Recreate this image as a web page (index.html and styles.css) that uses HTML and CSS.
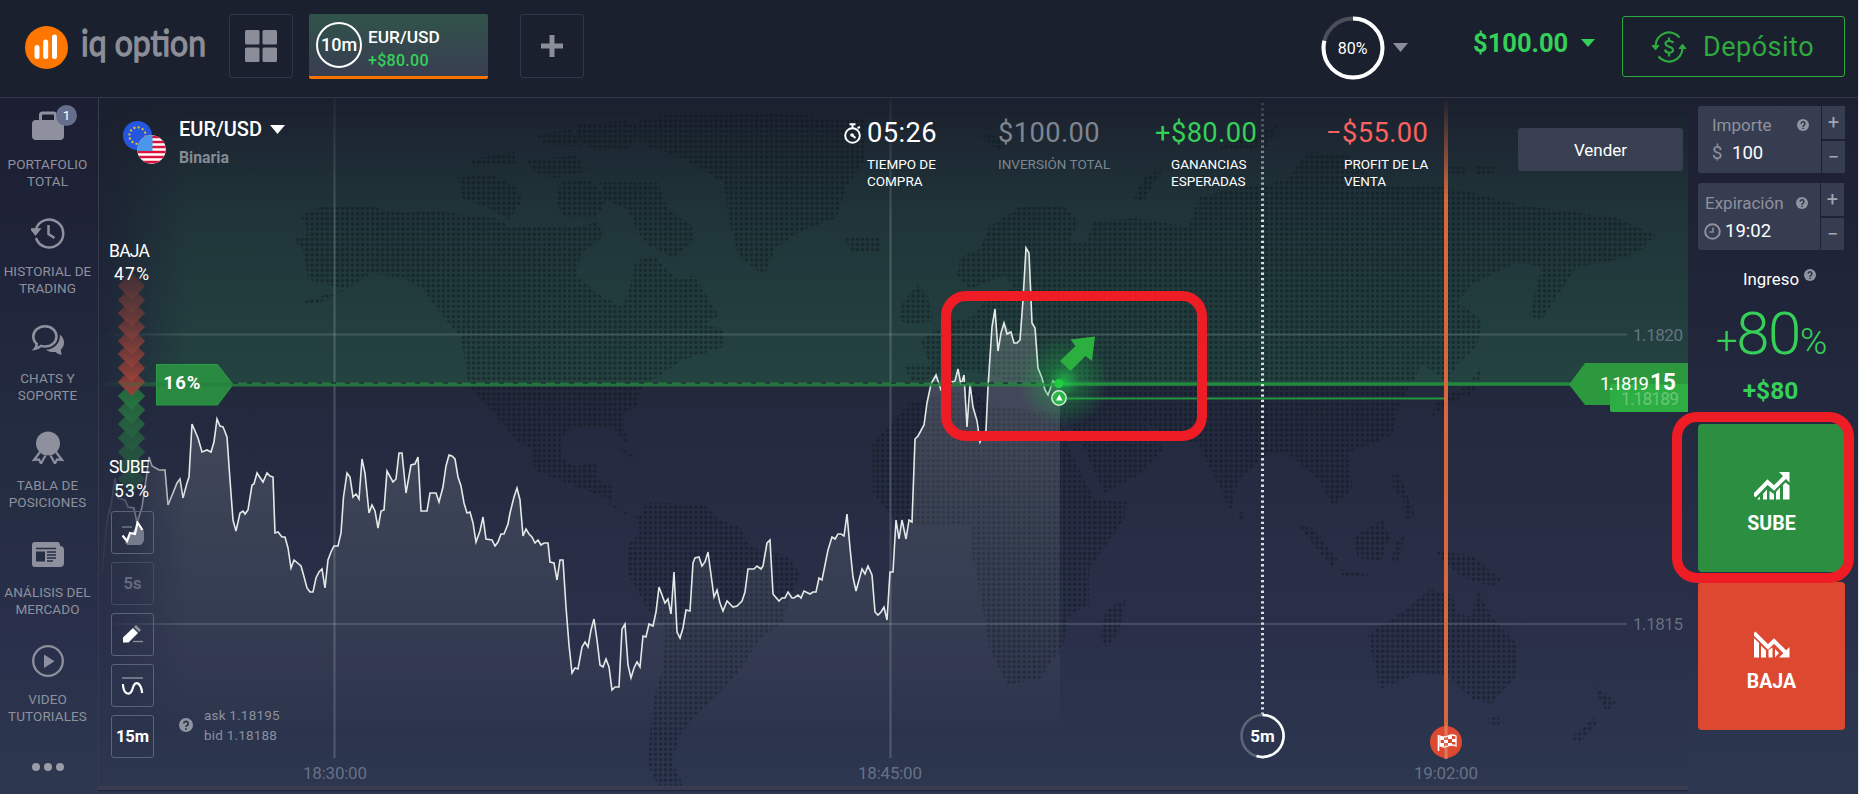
FILE: index.html
```html
<!DOCTYPE html>
<html lang="es">
<head>
  <meta charset="UTF-8" />
  <meta name="viewport" content="width=device-width, initial-scale=1" />
  <title>IQ Option</title>
  <link rel="stylesheet" href="styles.css">
</head>
<body>
  <!-- shared symbols -->
  <svg class="defs" width="0" height="0">
    <symbol id="help" viewBox="0 0 14 14">
      <circle cx="7" cy="7" r="7" fill="#8f94a1"/>
      <path d="M4.8 5.5a2.2 2.2 0 1 1 3.3 1.9q-1.1.6-1.1 1.5M7 10.2v1.5" fill="none" stroke="#2a3045" stroke-width="1.7"/>
    </symbol>
  </svg>

  <header class="main-header">
    <a href="#" class="logo">
      <svg width="43" height="43" viewBox="0 0 43 43">
        <circle cx="21.5" cy="21.5" r="21.5" fill="#ff7700"/>
        <path d="M12 21.5v9M20.7 16v14.5M29.5 11v19.5" stroke="#fff" stroke-width="5" stroke-linecap="round"/>
      </svg>
      <svg class="logo-name" width="140" height="54" viewBox="0 0 140 54">
        <text x="0" y="35" textLength="125" lengthAdjust="spacingAndGlyphs">iq option</text>
      </svg>
    </a>
    <button class="square-btn grid-btn">
      <svg width="32" height="32" viewBox="0 0 32 32" fill="#8b8e98">
        <rect width="14.5" height="14.5" rx="1.5"/><rect x="17.5" width="14.5" height="14.5" rx="1.5"/>
        <rect y="17.5" width="14.5" height="14.5" rx="1.5"/><rect x="17.5" y="17.5" width="14.5" height="14.5" rx="1.5"/>
      </svg>
    </button>
    <div class="tab">
      <span class="tab-time">10m</span>
      <div class="tab-info">
        <span>EUR/USD</span>
        <span class="green">+$80.00</span>
      </div>
    </div>
    <button class="square-btn add-btn">
      <svg width="22" height="22" viewBox="0 0 22 22"><path d="M0 11h22M11 0v22" stroke="#8b8e98" stroke-width="5"/></svg>
    </button>

    <div class="header-right">
      <svg class="progress" width="64" height="64" viewBox="0 0 64 64">
        <circle cx="32" cy="32" r="29.5" fill="none" stroke="#4b4f5a" stroke-width="4"/>
        <circle cx="32" cy="32" r="29.5" fill="none" stroke="#fff" stroke-width="4" pathLength="100" stroke-dasharray="79 100" transform="rotate(-90 32 32)"/>
        <text x="31.500" y="38" text-anchor="middle">80%</text>
      </svg>
      <svg class="caret" width="15" height="9"><path d="M0 0h15L7.500 9z" fill="#8b8e98"/></svg>
      <span class="balance">$100.00</span>
      <svg class="balance-caret" width="14" height="8"><path d="M0 0h14L7 8z" fill="#35d058"/></svg>
      <button class="deposit">
        <svg width="36" height="32" viewBox="0 0 36 32" fill="none" stroke="#2ea83f" stroke-width="2.200">
          <path d="M4.500 15A13.500 13.500 0 0 1 28.500 6.500M31.500 17A13.500 13.500 0 0 1 7.500 25.500"/>
          <path d="M1 14.500h7L4.500 19zM28 17.500h7L31.500 13z" fill="#2ea83f" stroke-width="1"/>
          <path d="M22 12c-.5-2.500-7.500-3-7.500.5 0 4 7.500 2.500 7.500 6.500s-7.500 3.500-8-.5M18 6.500v3.500M18 21.500v4"/>
        </svg>
        <span>Depósito</span>
      </button>
    </div>
  </header>

  <main class="workspace">
    <nav class="sidebar">
      <a class="side-item">
        <span class="side-icon">
          <svg width="32" height="30" viewBox="0 0 32 30"><path d="M8.500 11V4a2 2 0 0 1 2-2h11a2 2 0 0 1 2 2v7" fill="none" stroke="#8e919d" stroke-width="3"/><rect y="9" width="32" height="20" rx="4" fill="#8e919d"/></svg>
          <span class="badge">1</span>
        </span>
        PORTAFOLIO<br>TOTAL
      </a>
      <a class="side-item">
        <span class="side-icon"><svg width="34" height="32" viewBox="0 0 34 32" fill="none" stroke="#8e919d" stroke-width="2.500"><path d="M5 12A14 14 0 1 1 5 21"/><path d="M17.500 8v9l6 4"/><path d="M1 12.500h7L4.500 17z" fill="#8e919d"/></svg></span>
        HISTORIAL DE<br>TRADING
      </a>
      <a class="side-item">
        <span class="side-icon"><svg width="32" height="30" viewBox="0 0 32 30"><path d="M13 1.300c6.500 0 11.500 4.500 11.500 10.200S19.500 21.500 13 21.500c-1.500 0-3-.2-4-.6-2 1.800-4 2.500-6 2.800 1.200-1.500 1.800-3.200 1.700-5C2.500 17 1.300 14.500 1.300 11.500 1.300 6 6.500 1.300 13 1.300z" fill="none" stroke="#8e919d" stroke-width="2.600"/><path d="M28 9.500c2.500 2 4 5 4 8 0 3-1.300 5.500-3.200 7.200 0 1.800.4 3.300 1.200 4.800-2.800 0-5-1-6.500-2.600-3.500.6-7-.1-9.500-2.100C21.500 24.500 28.500 18.500 28 9.500z" fill="#8e919d"/></svg></span>
        CHATS Y<br>SOPORTE
      </a>
      <a class="side-item">
        <span class="side-icon"><svg width="32" height="33" viewBox="0 0 32 33"><circle cx="16" cy="12.500" r="12" fill="#8e919d"/><path d="M8 21l-6 8 5-.5 2 4 4.500-8M24 21l6 8-5-.5-2 4-4.500-8" fill="none" stroke="#8e919d" stroke-width="2.200"/></svg></span>
        TABLA DE<br>POSICIONES
      </a>
      <a class="side-item">
        <span class="side-icon"><svg width="32" height="25" viewBox="0 0 32 25"><path d="M3 0h22a3 3 0 0 1 3 3v1a4 4 0 0 1 4 4v13a4 4 0 0 1-4 4H3a3 3 0 0 1-3-3V3a3 3 0 0 1 3-3z" fill="#8e919d"/><path d="M4 6.500h20M15 10h9M15 13h9M15 16h9M15 19h6" stroke="#262e43" stroke-width="1.500"/><rect x="4" y="9.500" width="9" height="10" fill="#262e43"/></svg></span>
        ANÁLISIS DEL<br>MERCADO
      </a>
      <a class="side-item">
        <span class="side-icon"><svg width="32" height="32" viewBox="0 0 32 32"><circle cx="16" cy="16" r="14.800" fill="none" stroke="#8e919d" stroke-width="2.300"/><path d="M12 9.500v13.500l10.500-6.700z" fill="#8e919d"/></svg></span>
        VIDEO<br>TUTORIALES
      </a>
      <a class="more"><i></i><i></i><i></i></a>
    </nav>

    <section class="chart">
      <svg class="plot" width="1591" height="696" viewBox="98 98 1591 696">
        <defs>
          <linearGradient id="band" x1="0" y1="0" x2="0" y2="1">
            <stop offset="0" stop-color="#265c45" stop-opacity="0"/>
            <stop offset=".4" stop-color="#265c45" stop-opacity=".3"/>
            <stop offset="1" stop-color="#265c45" stop-opacity=".52"/>
          </linearGradient>
          <linearGradient id="area" gradientUnits="userSpaceOnUse" x1="0" y1="248" x2="0" y2="740">
            <stop offset="0" stop-color="#fff" stop-opacity=".2"/>
            <stop offset=".35" stop-color="#fff" stop-opacity=".14"/>
            <stop offset=".75" stop-color="#d0f0e0" stop-opacity=".07"/>
            <stop offset="1" stop-color="#fff" stop-opacity="0"/>
          </linearGradient>
          <linearGradient id="edge" x1="0" y1="0" x2="1" y2="0">
            <stop offset="0" stop-color="#fff" stop-opacity="0"/>
            <stop offset=".25" stop-color="#fff" stop-opacity=".2"/>
            <stop offset="1" stop-color="#fff"/>
          </linearGradient>
          <mask id="fade" maskUnits="userSpaceOnUse" x="98" y="98" width="1591" height="696">
            <rect x="98" y="98" width="90" height="696" fill="url(#edge)"/>
            <rect x="188" y="98" width="1501" height="696" fill="#fff"/>
          </mask>
          <linearGradient id="topfade" gradientUnits="userSpaceOnUse" x1="0" y1="98" x2="0" y2="200">
            <stop offset="0" stop-color="#d8603f" stop-opacity="0"/>
            <stop offset="1" stop-color="#d8663f"/>
          </linearGradient>
          <linearGradient id="vline" gradientUnits="userSpaceOnUse" x1="0" y1="98" x2="0" y2="220">
            <stop offset="0" stop-color="#c8d8d8" stop-opacity=".05"/>
            <stop offset="1" stop-color="#c8d8d8" stop-opacity=".22"/>
          </linearGradient>
          <linearGradient id="dotline" gradientUnits="userSpaceOnUse" x1="0" y1="98" x2="0" y2="220">
            <stop offset="0" stop-color="#dfeae6" stop-opacity=".1"/>
            <stop offset="1" stop-color="#dfeae6" stop-opacity=".95"/>
          </linearGradient>
          <radialGradient id="glow">
            <stop offset="0" stop-color="#1fd04a" stop-opacity=".75"/>
            <stop offset=".35" stop-color="#1fb84a" stop-opacity=".35"/>
            <stop offset="1" stop-color="#1fb84a" stop-opacity="0"/>
          </radialGradient>
          <linearGradient id="red" x1="0" y1="0" x2="0" y2="1">
            <stop offset="0" stop-color="#6f3536"/><stop offset="1" stop-color="#a8463a"/>
          </linearGradient>
          <linearGradient id="green" x1="0" y1="0" x2="0" y2="1">
            <stop offset="0" stop-color="#22603a"/><stop offset="1" stop-color="#2a8a44"/>
          </linearGradient>
          <linearGradient id="moodfade" x1="0" y1="0" x2="0" y2="1">
            <stop offset="0" stop-color="#fff" stop-opacity=".35"/>
            <stop offset=".5" stop-color="#fff" stop-opacity=".95"/>
            <stop offset="1" stop-color="#fff" stop-opacity=".25"/>
          </linearGradient>
          <mask id="moodmask" maskUnits="userSpaceOnUse" x="110" y="270" width="44" height="225">
            <rect x="110" y="270" width="44" height="225" fill="url(#moodfade)"/>
          </mask>
          <pattern id="dots" patternUnits="userSpaceOnUse" x="1.500" width="5.050" height="5.150">
            <circle cx="2.500" cy="2.500" r="1.850" fill="#0a1418" fill-opacity=".42"/>
          </pattern>
          <!-- continents -->
          <clipPath id="land">
            <path transform="translate(270 98) scale(.5102 .4439)" d="M60 265L105 245 200 245 250 258 345 255 375 262 440 270 470 290 600 290 640 280 655 310 610 350 600 400 640 440 690 470 705 430 715 370 750 355 800 410 830 400 880 490 850 510 890 520 890 560 810 590 770 620 730 650 720 690 690 715 700 780 670 740 590 740 570 770 570 810 600 830 640 820 640 860 670 870 670 920 700 935 725 940 740 910 850 915 880 950 920 965 940 1010 1010 1030 1040 1070 1020 1120 1005 1180 960 1220 920 1290 890 1330 840 1385 800 1440 790 1500 810 1548 760 1548 740 1500 750 1360 772 1280 775 1190 740 1150 700 1070 700 1010 725 980 720 945 690 935 660 900 610 880 520 840 510 790 480 770 440 710 390 655 375 540 330 480 300 430 260 405 200 395 150 430 75 410 65 340 45 320 75 305zM690 65L760 40 1000 35 1170 50 1165 140 1130 200 1110 270 1040 300 990 340 970 400 920 360 900 280 890 190 800 130 740 110zM600 60L700 50 730 80 700 115 640 120 600 90zM520 85L590 70 610 110 540 105zM370 180L430 170 480 200 495 230 470 275 430 250 375 225zM390 140L480 120 480 150 400 155zM500 140L600 130 620 165 560 180 515 165zM570 190L630 185 660 230 640 270 575 270 560 230zM645 190L760 190 780 250 830 290 830 320 790 360 740 330 720 300 700 250 660 230zM1125 315H1195V345L1140 345zM1240 460L1270 420 1290 450 1300 500 1260 510 1230 500zM680 780L730 820 690 800zM60 460L150 430 90 465z"/>
            <path transform="translate(920 98) scale(.4974 .4439)" d="M-35 600L20 600 0 545 70 500 110 490 140 440 190 430 170 400 100 430 75 400 80 360 120 340 140 290 200 245 290 245 320 280 300 320 330 330 350 280 430 270 540 290 560 225 620 205 700 195 740 180 780 120 860 130 930 200 1050 200 1100 210 1200 240 1400 270 1480 310 1440 350 1380 370 1320 380 1250 500 1225 490 1250 380 1200 370 1110 420 1080 460 1130 500 1120 560 1080 600 1060 640 1010 600 960 700 950 760 860 800 870 880 830 920 800 860 740 800 700 800 640 860 625 930 590 850 560 780 480 750 440 720 490 790 440 850 370 890 330 790 290 715 250 650 190 640 130 620 50 610-10 650zM-24 690L50 665 110 660 130 690 230 705 280 710 300 790 350 905 415 910 410 950 340 1060 340 1140 295 1170 290 1230 240 1310 175 1320 140 1240 125 1140 105 1030 100 965-40 965-95 890-96 780zM415 1130L400 1200 375 1240 362 1210 375 1150zM640 930L655 935 652 955 640 950zM430 225L450 180 495 150 470 190 450 235zM120 80L180 90 160 120zM590 120L620 100 720 60 700 110zM1060 155H1100V170H1060zM1115 155L1160 155 1150 175 1120 175zM1130 600L1120 660 1060 690 1030 720 1035 680 1100 650zM870 990L930 950 945 990 925 1045 880 1035zM758 960L790 970 840 1040 830 1060zM840 1060L905 1075 900 1082 850 1075zM955 1000L975 985 960 1050 948 1045zM1035 1020L1110 1030 1170 1085 1150 1100 1090 1080 1060 1050zM950 845L965 850 995 940 975 950 970 900 950 880zM900 1210L980 1150 1025 1105 1070 1120 1080 1160 1110 1170 1120 1105 1150 1170 1200 1230 1200 1300 1150 1365 1110 1355 1060 1300 1000 1295 925 1332zM1145 1395H1165V1412H1145zM1355 1325L1400 1360 1380 1385zM1355 1395L1360 1410 1325 1455 1310 1440z"/>
          </clipPath>
          <path id="dia" d="M0-13.700L13.700 0 0 13.700-13.700 0z"/>
        </defs>

        <rect x="98" y="98" width="1591" height="286" fill="url(#band)" mask="url(#fade)"/>
        <g clip-path="url(#land)"><rect x="98" y="98" width="1591" height="688" fill="url(#dots)"/></g>

        <!-- grid -->
        <path d="M334.500 98V758M890.500 98V758" stroke="url(#vline)" stroke-width="2"/>
        <path d="M98 334.500H1627M98 624H1627" stroke="#c8d8d8" stroke-opacity=".18" stroke-width="2" mask="url(#fade)"/>

        <!-- quotes -->
        <g mask="url(#fade)">
          <path fill="url(#area)" d="M102 572L106 530 110 512 115 478 118 498 125 500 128 507 134 508 137 523 142 507 147 473 149 457 152 466 159 470 165 470 168 505 173 493 180 479 183 498 189 477 192 424 198 438 202 452 207 450 211 452 217 419 220 426 227 437 233 520 236 531 240 513 248 510 252 485 257 473 263 482 267 473 273 477 275 533 285 537 291 568 294 560 301 566 307 588 313 592 316 578 322 569 325 588 328 560 334 546 338 546 341 533 343.500 497 347 473 350 477 353 497 359 499 362 459 365 473 369 513 372 505 378 528 381 511 384 510 387 471 393 482 396 479 399 453 402 453 406 493 411 465 418 457 421 511 427 511 430 493 436 493 439 502 446 466 449 455 455 459 464 503 467 513 470 512 476 542 483 517 486 539 492 540 495 546 501 534 504 534 510 513 517 488 520 500 523 536 526 529 535 543 548 543 550 562 554 563 557 580 560 560 563 560 566 607 572 673 578 669 582 647 588 647 594 619 600 665 606 659 612 690 619 687 622 629 625 624 628 665 631 678 637 662 640 667 643 636 649 624 653 626 659 587 665 603 668 599 671 614 674 572 677 632 680 638 686 610 690 611 693 563 699 557 702 566 708 552 714 597 717 590 723 611 727 601 733 607 742 601 748 569 763 566 767 543 770 540 773 594 779 601 788 592 794 598 804 591 816 592 819 578 822 580 832 537 844 536 847 514 853 577 856 591 862 569 868 566 872 575 875 612 878 615 884 607 887 620 890 572 893 572 896 520 899 539 902 520 906 539 909 520 912 522 915 439 924 425 931 384 936 375 941 390 952 382 955 381 958 369 961 385 964 375 967 427 970 384 973 407 980 442 986 430 988 387 992 327 995 309 998 351 1004 323 1011 332 1014 343 1020 340 1023 300 1026 248 1029 253 1032 323 1035 328 1038 368 1045 390 1048 395 1053 381 1060 384V757H98z"/>
          <polyline class="quote" points="102,572 106,530 109,510 110,512 115,478 118,498 125,500 128,507 134,508 137,523 142,507 147,473 149,457 152,466 159,470 165,470 168,505 173,493 177,483 180,479 183,498 187,483 189,477 192,424 198,438 202,452 207,450 211,452 214,442 217,419 220,426 223,427 227,437 230,480 233,520 236,531 240,513 243,511 245,514 248,510 252,485 254,484 257,473 263,482 267,473 270,476 273,477 275,533 278,532 282,537 285,537 288,548 291,568 294,560 301,566 303,573 307,588 310,592 313,592 316,578 319,572 322,569 325,588 328,560 331,552 334,546 338,546 341,533 343.500,497 347,473 350,477 353,497 356,494 359,499 362,459 365,473 369,513 372,505 375,511 378,528 381,511 384,510 387,471 393,482 396,479 399,453 402,453 406,493 411,465 415,464 418,457 421,511 427,511 430,493 436,493 439,502 443,487 446,466 449,455 452,456 455,459 458,477 461,486 464,503 467,513 470,512 473,523 476,542 480,531 483,517 486,539 492,540 495,546 498,542 501,534 504,534 508,524 510,513 514,497 517,488 520,500 523,536 526,529 529,534 532,537 535,543 538,540 541,545 544,543 548,543 550,562 554,563 557,580 560,560 563,560 566,607 569,645 572,673 575,668 578,669 582,647 585,642 588,647 591,630 594,619 597,640 600,665 603,667 606,659 609,667 612,690 615,687 619,687 622,629 625,624 628,665 631,678 634,668 637,662 640,667 643,636 646,637 649,624 653,626 656,612 659,587 665,603 668,599 671,614 674,572 677,632 680,638 683,628 686,610 690,611 693,563 695,558 699,557 702,566 705,562 708,552 714,597 717,590 720,603 723,611 727,601 733,607 737,606 742,601 745,592 748,569 754,569 757,566 761,569 763,566 767,543 770,540 773,594 779,601 782,598 785,598 788,592 792,598 794,598 798,595 801,598 804,591 810,594 813,592 816,592 819,578 822,580 828,550 832,537 835,539 838,534 841,534 844,536 847,514 850,548 853,577 856,591 862,569 865,574 868,566 872,575 875,612 878,615 881,612 884,607 887,620 890,572 893,572 896,520 899,539 902,520 906,539 909,520 912,522 915,439 918,436 924,425 927,403 931,384 936,375 941,390 952,382 955,381 958,369 961,385 964,375 967,427 970,384 973,407 977,421 980,442 986,430 988,387 992,327 995,309 998,351 1001,333 1004,323 1007,334 1011,332 1014,343 1017,343 1020,340 1023,300 1026,248 1029,253 1032,323 1035,328 1038,368 1042,378 1045,390 1048,395 1053,381 1057,385"/>
        </g>

        <!-- mood, upper diamonds lie over the lower ones -->
        <g mask="url(#moodmask)">
          <g fill="url(#green)">
            <use href="#dia" x="131.500" y="479"/><use href="#dia" x="131.500" y="465"/><use href="#dia" x="131.500" y="452"/><use href="#dia" x="131.500" y="438"/><use href="#dia" x="131.500" y="424"/><use href="#dia" x="131.500" y="410"/><use href="#dia" x="131.500" y="396"/>
          </g>
          <g fill="url(#red)">
            <use href="#dia" x="131.500" y="382"/><use href="#dia" x="131.500" y="368"/><use href="#dia" x="131.500" y="354"/><use href="#dia" x="131.500" y="341"/><use href="#dia" x="131.500" y="327"/><use href="#dia" x="131.500" y="313"/><use href="#dia" x="131.500" y="300"/><use href="#dia" x="131.500" y="286"/>
          </g>
        </g>
        <g class="mood">
          <text x="109" y="256.500" textLength="41">BAJA</text>
          <text x="114" y="280" textLength="35">47%</text>
          <text x="109" y="472.500" textLength="41">SUBE</text>
          <text x="114" y="497" textLength="35">53%</text>
        </g>

        <!-- current price -->
        <path d="M156.500 364.500H217.500L233 384.500 217.500 405H156.500z" fill="#2b8a41" stroke="#2a9c43"/>
        <path d="M98 384.500H1060" stroke="#27803f" stroke-opacity=".85" stroke-width="4" mask="url(#fade)"/>
        <path d="M233 383H1052" stroke="#1d3236" stroke-width="1.500" stroke-dasharray="5 9"/>
        <path d="M1060 384H1572" stroke="#228a3c" stroke-width="3.500"/>
        <path d="M1067 398.500H1446" stroke="#23963d" stroke-width="2"/>
        <text class="share" x="163.500" y="388.500" textLength="37">16%</text>

        <path d="M1262.500 103V714" stroke="url(#dotline)" stroke-width="3" stroke-dasharray="2.300 3"/>
        <circle cx="1064" cy="381" r="46" fill="url(#glow)"/>
        <path d="M1095 336.500L1092 361 1085.500 356 1070.500 371 1060 361 1075.500 346 1070.500 339.500z" fill="#2bb040"/>
        <circle cx="1059" cy="383.500" r="4.500" fill="#22cc40"/>
        <circle cx="1059" cy="398" r="7.200" fill="#2bb548" stroke="#cdeed4" stroke-width="1.500"/>
        <path d="M1056 400.500h6.500l-3.200-6z" fill="#fff"/>

        <!-- expiration lines -->
        <rect x="1444" y="98" width="4" height="659" fill="url(#topfade)"/>
        <g fill="none" stroke-width="2.600">
          <circle cx="1262.500" cy="736" r="21" stroke="#5d6679"/>
          <path d="M1262.500 715a21 21 0 1 1-6 41.100" stroke="#fff"/>
        </g>
        <text class="five" x="1262.500" y="742" text-anchor="middle">5m</text>
        <circle cx="1446" cy="742" r="16" fill="#dc4830"/>
        <path d="M1446 726v33" stroke="#e0795f" stroke-width="3"/>
        <path d="M1438.500 735v16" stroke="#fff" stroke-width="1.600"/>
        <path d="M1440 736q4 2 8 0t8 0v10q-4-2-8 0t-8 0z" fill="none" stroke="#fff" stroke-width="1.300"/>
        <path d="M1440 737h4v3h-4zM1448 736h4v3h-4zM1444 740h4v3h-4zM1452 739h4v3h-4zM1440 743h4v3h-4zM1448 743h4v2h-4z" fill="#fff"/>

        <!-- price tag -->
        <path d="M1569 384.500L1585 363H1689V405H1585z" fill="#2c993f"/>
        <rect x="1610" y="384" width="81" height="28" rx="2" fill="#2dae42"/>
        <text class="tag-faint" x="1621" y="404.500" textLength="58">1.18189</text>
        <text class="tag" x="1600" y="390" textLength="49">1.1819</text>
        <text class="tag-big" x="1650" y="389.500" textLength="26">15</text>

        <!-- axis -->
        <g class="axis">
          <text x="303" y="778.500" textLength="64">18:30:00</text>
          <text x="858" y="778.500" textLength="64">18:45:00</text>
          <text x="1414" y="778.500" textLength="64">19:02:00</text>
          <text x="1633" y="341" textLength="50">1.1820</text>
          <text x="1633" y="630" textLength="50">1.1815</text>
        </g>
        <rect x="98" y="786" width="1591" height="4" fill="#393c50"/>
        <rect x="98" y="790" width="1591" height="1.200" fill="#20263a"/>
      </svg>

      <div class="chart-top">
        <svg class="flags" width="44" height="44" viewBox="0 0 44 44">
          <defs><clipPath id="us"><circle cx="28.500" cy="28.500" r="14.300"/></clipPath></defs>
          <circle cx="14.500" cy="14.500" r="14.500" fill="#2456e0"/>
          <circle cx="14.500" cy="14.500" r="8.200" fill="none" stroke="#e8c830" stroke-width="2" stroke-dasharray="2 2.290"/>
          <g clip-path="url(#us)"><rect x="14" y="14" width="30" height="30" fill="#fff"/><path d="M14 16h30M14 21h30M14 26h30M14 31h30M14 36h30M14 41h30" stroke="#d8143c" stroke-width="2.500"/><rect x="14" y="14" width="15.500" height="16" fill="#4a97ea"/></g>
        </svg>
        <div class="asset">
          <h1>EUR/USD <svg width="15" height="9"><path d="M0 0h15L7.500 9z" fill="#fff"/></svg></h1>
          <p>Binaria</p>
        </div>
        <div class="stat time">
          <b><svg width="17" height="21" viewBox="0 0 17 21" fill="none" stroke="#fff" stroke-width="2"><circle cx="8.500" cy="12.500" r="7.300"/><path d="M5.500 1.300h6M8.500 1v4M13.500 5l2.500-1M8 12l3.500 3"/><circle cx="8" cy="12" r=".8"/></svg>05:26</b>
          <span>TIEMPO DE<br>COMPRA</span>
        </div>
        <div class="stat invested"><b>$100.00</b><span>INVERSIÓN TOTAL</span></div>
        <div class="stat profit"><b>+$80.00</b><span>GANANCIAS<br>ESPERADAS</span></div>
        <div class="stat loss"><b>−$55.00</b><span>PROFIT DE LA<br>VENTA</span></div>
        <button class="sell">Vender</button>
      </div>

      <div class="tools">
        <button><svg width="22" height="24" viewBox="0 0 22 24"><path d="M3 21.500L7 16 10 12 15 4 21 9A10 10 0 0 1 3 21.500z" fill="#757d8c"/><path d="M0 6h10" stroke="#70798a" stroke-width="1.500"/><path d="M.5 14.500l4.500 5.500 3-8 5 1L15.500 1.500 20.500 9" fill="none" stroke="#fff" stroke-width="2.200"/></svg></button>
        <button class="off">5s</button>
        <button><svg width="22" height="20" viewBox="0 0 22 20"><path d="M1 12.500L11 3l5 5L6.500 17.500H1z" fill="#fff"/><path d="M12 2l2-2 5 5-2 2z" fill="#8b93a3"/><path d="M11 16.500h10" stroke="#8b93a3" stroke-width="1.300"/></svg></button>
        <button><svg width="22" height="18" viewBox="0 0 22 18" fill="none"><path d="M0 1h21" stroke="#8b93a3" stroke-width="1.400"/><path d="M.8 7c1 12 8 12 10 4s8-6 9.400 5" stroke="#fff" stroke-width="2.200"/></svg></button>
        <button>15m</button>
      </div>

      <div class="quotes">
        <svg width="14" height="14"><use href="#help"/></svg>
        <p>ask 1.18195<br>bid 1.18188</p>
      </div>
      <div class="mark mark-deal"></div>
    </section>

    <aside class="panel">
      <div class="field">
        <div class="field-main">
          <label>Importe <svg width="12" height="12"><use href="#help"/></svg></label>
          <p><i>$</i>100</p>
        </div>
        <div class="steps"><button>+</button><button>−</button></div>
      </div>
      <div class="field expiry">
        <div class="field-main">
          <label>Expiración <svg width="12" height="12"><use href="#help"/></svg></label>
          <p><svg width="17" height="17" viewBox="0 0 17 17" fill="none" stroke="#8e919d" stroke-width="2"><circle cx="8.500" cy="8.500" r="7.300"/><path d="M9 4.500v4.500H5.500" stroke-width="1.500"/></svg>19:02</p>
        </div>
        <div class="steps"><button>+</button><button>−</button></div>
      </div>
      <p class="income">Ingreso <svg width="12" height="12"><use href="#help"/></svg></p>
      <p class="percent"><small>+</small>80<small class="sign">%</small></p>
      <p class="amount">+$80</p>
      <button class="trade up">
        <svg width="36" height="28" viewBox="0 0 36 28"><path d="M0 24L13.500 10 20 16 31 5" fill="none" stroke="#fff" stroke-width="4"/><path d="M25 0h10.500v10.500z" fill="#fff"/><path d="M3 27.500l3-3v3zM9 22l4-4.500v10H9zM15.500 19l4.500 3v5.500h-4.500zM22 20l4-4.500v12h-4zM29 13l2.500-2.500 4 3v14H29z" fill="#fff"/></svg>
        SUBE
      </button>
      <button class="trade down">
        <svg width="36" height="28" viewBox="0 0 36 28"><path d="M0 3L14 17 20 11 31 22" fill="none" stroke="#fff" stroke-width="4"/><path d="M35.500 17v10.500H25z" fill="#fff"/><path d="M0 8l5 5v14.500H0zM7 15.500l5 5v7H7zM14.500 20l4-2.500v10h-4zM21 19l4 4-4 4.500z" fill="#fff"/></svg>
        BAJA
      </button>
      <div class="mark mark-up"></div>
    </aside>
  </main>
</body>
</html>
```
FILE: styles.css
```css
* {
  box-sizing: border-box;
  margin: 0;
  padding: 0;
}

body {
  width: 1859px;
  height: 794px;
  overflow: hidden;
  background: #1b202e;
  border-right: 1px solid #e4e6ea;
  color: #fff;
  font-family: Roboto, "Liberation Sans", sans-serif;
}

button {
  font-family: inherit;
  color: inherit;
  background: none;
  border: none;
}

svg {
  display: block;
  flex-shrink: 0;
}

.defs {
  position: absolute;
}

.main-header {
  display: flex;
  align-items: flex-start;
  height: 98px;
  padding-left: 25px;
  background: #1b202e;
  border-bottom: 1px solid #2f3749;
}

.logo {
  display: flex;
  width: 204px;
  padding-top: 26px;
}

.logo-name {
  margin: -5px -20px 0 13px;
}

.logo-name text {
  font: 400 36px Lato, sans-serif;
  fill: #8b8e98;
  stroke: #8b8e98;
  stroke-width: 1.3;
}

.square-btn {
  display: flex;
  align-items: center;
  justify-content: center;
  width: 64px;
  height: 64px;
  margin-top: 14px;
  border: 1px solid #30364a;
  border-radius: 3px;
}

.tab {
  display: flex;
  align-items: center;
  width: 179px;
  height: 65px;
  margin: 14px 32px 0 16px;
  padding: 0 0 1px 7px;
  background: linear-gradient(#31544a, #383d51);
  border-bottom: 3px solid #f97400;
  border-radius: 2px;
}

.tab-time {
  width: 46px;
  height: 46px;
  border: 2.5px solid #fff;
  border-radius: 50%;
  font-size: 18px;
  font-weight: 500;
  line-height: 42px;
  text-align: center;
}

.tab-info {
  display: flex;
  flex-direction: column;
  margin-left: 6px;
  padding-top: 9px;
  font-size: 17.3px;
  font-weight: 500;
  line-height: 23px;
}

.tab-info .green {
  font-size: 16px;
  letter-spacing: .3px;
}

.green {
  color: #35d058;
}

.header-right {
  display: flex;
  margin-left: auto;
  padding-right: 13px;
}

.progress {
  margin: 16px 8px 0 0;
}

.progress text {
  font-size: 16px;
  fill: #fff;
}

.caret {
  margin-top: 43px;
}

.balance {
  width: 108px;
  margin: 27px 0 0 65px;
  font-size: 25.5px;
  font-weight: 700;
  line-height: 33px;
  color: #35d058;
}

.balance-caret {
  margin-top: 39px;
}

.deposit {
  display: flex;
  align-items: center;
  width: 223px;
  height: 61px;
  margin: 16px 0 0 27px;
  padding-left: 28px;
  border: 1px solid #2ea83f;
  border-radius: 3px;
  color: #2ea83f;
  font-size: 27px;
  letter-spacing: .5px;
}

.deposit span {
  margin-left: 16px;
}

.workspace {
  display: flex;
  height: 696px;
  background: linear-gradient(#1b202e 0, #20273a 35%, #242b40 50%, #2a3049 78%, #2d3750 100%);
}

/* sidebar */

.sidebar {
  width: 99px;
  padding-right: 3px;
  background: linear-gradient(#1c1f31, #20243a 25%, #232c40 50%, #292f4a 76%, #2d3850);
  border-right: 1px solid #353b4c;
}

.side-item {
  display: block;
  height: 107px;
  color: #8e919d;
  font-size: 13.5px;
  line-height: 17.3px;
  letter-spacing: .1px;
  text-align: center;
  white-space: nowrap;
}

.side-icon {
  position: relative;
  display: flex;
  align-items: center;
  justify-content: center;
  height: 58px;
  padding-bottom: 2px;
}

.badge {
  position: absolute;
  top: 7px;
  left: 56px;
  width: 21px;
  height: 21px;
  border-radius: 50%;
  background: #656e8c;
  color: #fff;
  line-height: 21px;
}

.more {
  display: flex;
  justify-content: center;
  gap: 4px;
  padding-top: 23px;
}

.more i {
  width: 8px;
  height: 8px;
  border-radius: 50%;
  background: #9a9da8;
}

/* chart */

.chart {
  position: relative;
  width: 1589px;
}

.plot {
  position: absolute;
  left: -1px;
  top: 0;
}

.quote {
  fill: none;
  stroke: #eef3f0;
  stroke-width: 1.6;
  stroke-opacity: .95;
}

.mood text {
  font-size: 17.5px;
  fill: #fff;
}

.share {
  font-size: 18.5px;
  font-weight: 700;
  fill: #fff;
}

.five {
  font-size: 17px;
  font-weight: 700;
  fill: #fff;
}

.axis text {
  font-size: 17px;
  fill: #8a93a3;
  fill-opacity: .65;
}

.tag {
  font-size: 18.5px;
  fill: #fff;
}

.tag-big {
  font-size: 23px;
  font-weight: 700;
  fill: #fff;
}

.tag-faint {
  font-size: 17.5px;
  fill: #fff;
  fill-opacity: .3;
}

.chart-top {
  position: relative;
  display: flex;
  align-items: flex-start;
  height: 90px;
  padding-left: 24px;
}

.flags {
  margin-top: 23px;
}

.asset {
  width: 665px;
  margin: 19px 0 0 12px;
}

.asset h1 {
  display: flex;
  align-items: center;
  gap: 8px;
  font-size: 20px;
  font-weight: 500;
  line-height: 24px;
}

.asset p {
  margin-top: 7px;
  color: #858c95;
  font-size: 15.8px;
  font-weight: 700;
  line-height: 20px;
}

.stat {
  padding-top: 19px;
}

.stat b {
  display: flex;
  align-items: center;
  gap: 6px;
  height: 32px;
  font-size: 27.3px;
  font-weight: 400;
  letter-spacing: .4px;
  white-space: nowrap;
}

.stat span {
  display: block;
  margin-top: 7px;
  font-size: 13.5px;
  line-height: 17.3px;
  white-space: nowrap;
}

.time {
  width: 154px;
}

.time span {
  padding-left: 23px;
}

.invested {
  width: 157px;
  color: #7f858e;
}

.profit {
  width: 171px;
}

.profit b {
  color: #35d058;
}

.profit span {
  padding-left: 16px;
}

.loss {
  width: 192px;
}

.loss b {
  color: #f8625f;
}

.loss span {
  padding-left: 18px;
}

.sell {
  width: 165px;
  height: 43px;
  margin-top: 30px;
  border-radius: 3px;
  background: #373f51;
  font-size: 17px;
}

.tools {
  position: absolute;
  top: 413px;
  left: 12px;
  display: flex;
  flex-direction: column;
  gap: 8px;
}

.tools button {
  display: flex;
  align-items: center;
  justify-content: center;
  width: 43px;
  height: 43px;
  border: 1px solid #59647a;
  border-radius: 3px;
  font-size: 16.5px;
  font-weight: 700;
}

.tools .off {
  border-color: #434d62;
  color: #626b7d;
}

.quotes {
  position: absolute;
  top: 607px;
  left: 80px;
  display: flex;
  align-items: center;
  gap: 11px;
  color: #8a909c;
  font-size: 13.5px;
  line-height: 20px;
  letter-spacing: .2px;
}

.mark {
  position: absolute;
  border: 10px solid #ee1c24;
  border-radius: 25px;
}

.mark-deal {
  top: 193px;
  left: 842px;
  width: 266px;
  height: 150px;
}

/* trade panel */

.panel {
  position: relative;
  width: 170px;
  padding: 8px 13px 0 10px;
  background: linear-gradient(#1c2031, #1f2336 20%, #232a40 50%, #2a304a 78%, #2d3850);
  text-align: center;
}

.field {
  display: flex;
  gap: 1px;
  height: 67px;
  text-align: left;
}

.field-main {
  flex: 1;
  padding: 8px 0 0 14px;
  border-radius: 3px 0 0 3px;
  background: #373d51;
}

.field label {
  display: flex;
  align-items: center;
  justify-content: space-between;
  padding-right: 12px;
  color: #8e919d;
  font-size: 17px;
  line-height: 22px;
}

.field p {
  display: flex;
  align-items: center;
  margin-top: 5px;
  font-size: 18.5px;
  line-height: 24px;
}

.field i {
  width: 20px;
  color: #8e919d;
  font-style: normal;
}

.steps {
  display: flex;
  flex-direction: column;
  gap: 2px;
  width: 23px;
}

.steps button {
  flex: 1;
  background: #373d51;
  color: #a4a7b1;
  font-size: 20px;
  line-height: 20px;
}

.expiry {
  margin: 10px 1px 0 0;
}

.expiry .field-main {
  padding: 9px 0 0 7px;
}

.expiry p {
  gap: 4px;
  margin-left: -1px;
}

.income {
  display: flex;
  justify-content: center;
  gap: 5px;
  height: 36px;
  margin: 18px 0 0 16px;
  font-size: 16.8px;
  line-height: 22px;
}

.income svg {
  margin-top: 1px;
}

.percent {
  height: 71px;
  margin-left: -1px;
  color: #35d058;
  font-size: 60px;
  font-weight: 300;
  line-height: 60px;
  letter-spacing: -1.4px;
  white-space: nowrap;
}

.percent small {
  font-size: 38px;
}

.percent .sign {
  font-size: 37px;
}

.amount {
  height: 49px;
  margin-left: -2px;
  color: #35d058;
  font-size: 24.5px;
  font-weight: 700;
  line-height: 32px;
}

.trade {
  display: flex;
  flex-direction: column;
  align-items: center;
  width: 147px;
  height: 148px;
  padding-top: 48px;
  border-radius: 4px;
  font-size: 19.5px;
  font-weight: 700;
}

.trade svg {
  margin-bottom: 12px;
}

.up {
  background: #2b8e41;
}

.down {
  margin-top: 10px;
  background: #dc4830;
}

.mark-up {
  top: 314px;
  left: -16px;
  width: 182px;
  height: 171px;
}
```
